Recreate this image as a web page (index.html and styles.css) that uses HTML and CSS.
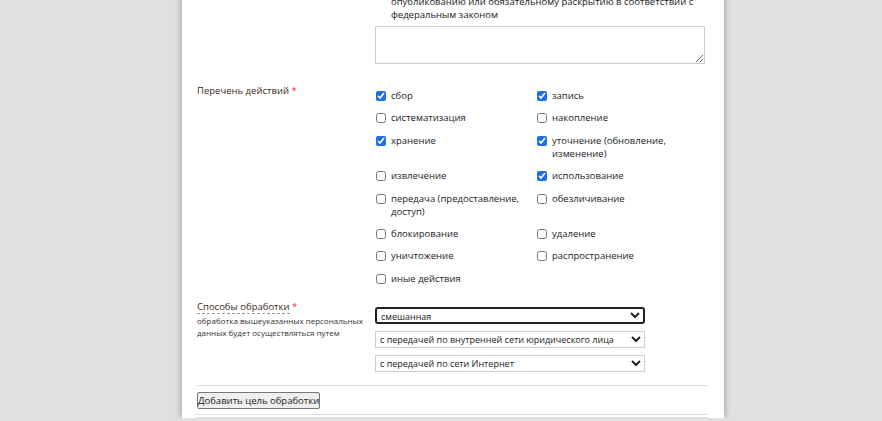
FILE: index.html
```html
<!DOCTYPE html>
<html lang="ru">
<head>
  <meta charset="UTF-8">
  <title>Цель обработки персональных данных</title>
  <link rel="stylesheet" href="styles.css">
</head>
<body>
  <div class="page">
    <form class="form">

      <div class="row">
        <div class="row-label"></div>
        <div class="row-field">
          <label class="check wide">
            <input type="checkbox">
            <span>персональные данные, подлежащие<br>опубликованию или обязательному раскрытию в соответствии с<br>федеральным законом</span>
          </label>
          <textarea class="note"></textarea>
        </div>
      </div>

      <div class="row actions">
        <div class="row-label">Перечень действий <span class="req">*</span></div>
        <div class="row-field checks">
          <label class="check"><input type="checkbox" checked><span>сбор</span></label>
          <label class="check"><input type="checkbox" checked><span>запись</span></label>
          <label class="check"><input type="checkbox"><span>систематизация</span></label>
          <label class="check"><input type="checkbox"><span>накопление</span></label>
          <label class="check"><input type="checkbox" checked><span>хранение</span></label>
          <label class="check"><input type="checkbox" checked><span>уточнение (обновление, изменение)</span></label>
          <label class="check"><input type="checkbox"><span>извлечение</span></label>
          <label class="check"><input type="checkbox" checked><span>использование</span></label>
          <label class="check"><input type="checkbox"><span>передача (предоставление, доступ)</span></label>
          <label class="check"><input type="checkbox"><span>обезличивание</span></label>
          <label class="check"><input type="checkbox"><span>блокирование</span></label>
          <label class="check"><input type="checkbox"><span>удаление</span></label>
          <label class="check"><input type="checkbox"><span>уничтожение</span></label>
          <label class="check"><input type="checkbox"><span>распространение</span></label>
          <label class="check"><input type="checkbox"><span>иные действия</span></label>
        </div>
      </div>

      <div class="row ways">
        <div class="row-label">
          <span class="hint">Способы обработки</span> <span class="req">*</span>
          <div class="sub">обработка вышеуказанных персональных данных будет осуществляться путем</div>
        </div>
        <div class="row-field selects">
          <select class="focused">
            <option>смешанная</option>
          </select>
          <select>
            <option>с передачей по внутренней сети юридического лица</option>
          </select>
          <select>
            <option>с передачей по сети Интернет</option>
          </select>
        </div>
      </div>

      <hr class="sep">
      <button type="button" class="add">Добавить цель обработки</button>
      <hr class="sep double">
    </form>
  </div>
</body>
</html>
```

FILE: styles.css
```css
body {
  margin: 0;
  background-color: #e0e0e0;
  font-family: "Open Sans", Arial, sans-serif;
  font-size: 9.5px;
  line-height: 13px;
  color: #222;
  overflow: hidden;
}
.page {
  width: 511px;
  margin-left: 182px;
  padding: 0 16px 0 15px;
  min-height: 419px;
  background-color: white;
  box-shadow: 0 0 7px rgba(0,0,0,0.35);
}
.form {
  margin-top: -18px;
}
.row {
  display: grid;
  grid-template-columns: 178px 1fr;
}
.row-label {
  color: #3a2b22;
}
.req {
  color: #e0302c;
}
.check {
  display: flex;
  align-items: flex-start;
  color: #222;
}
.check input {
  width: 10px;
  height: 10px;
  margin: 2px 5px 0 1px;
  flex: none;
  accent-color: #1f6fe5;
}
.check.wide {
  width: 330px;
}
.note {
  display: block;
  width: 330px;
  height: 38px;
  margin: 5px 0 0;
  padding: 2px;
  box-sizing: border-box;
  border: 1px solid #ccc;
  font: inherit;
}
.actions {
  margin-top: 20px;
}
.checks {
  display: grid;
  grid-template-columns: 161px 150px;
  row-gap: 9.4px;
  padding-top: 5px;
  align-content: start;
}
.ways {
  margin-top: 15px;
}
.hint {
  border-bottom: 1px dashed #999;
}
.sub {
  font-size: 8px;
  line-height: 12px;
  margin-top: 2px;
  color: #333;
}
.selects {
  display: flex;
  flex-direction: column;
  gap: 7px;
  padding-top: 7px;
}
select {
  width: 270px;
  height: 17px;
  padding: 0;
  font: inherit;
  font-size: 9px;
  color: #222;
  background-color: white;
  border: 1px solid #ccc;
  border-radius: 0;
}
select.focused {
  border: 2px solid #222;
  border-radius: 3px;
}
.sep {
  border: none;
  border-top: 1px solid #ddd;
  margin: 13px 0 6px;
}
.sep.double {
  height: 2px;
  border-bottom: 1px solid #ddd;
  margin: 5px 0 0;
}
.add {
  font: inherit;
  padding: 1px 0;
  color: #222;
  background-color: #efefef;
  border: 1px solid #767676;
  border-radius: 2px;
}
```
